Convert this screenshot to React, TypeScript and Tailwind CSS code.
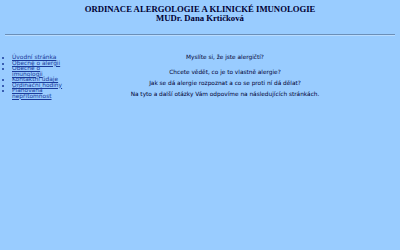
export default function App() {
  const links = [
    "Úvodní stránka",
    "Obecně o alergii",
    "Obecně o imunologii",
    "Kontaktní údaje",
    "Ordinační hodiny",
    "Plánovaná nepřítomnost",
  ]

  return (
    <div className="min-h-[250px] bg-[#99ccff] text-[#000033] font-['Liberation_Serif',serif]">
      {/* Header */}
      <header className="pt-[5px] text-center font-bold text-[8.7px] leading-[8.6px]">
        <h1>ORDINACE ALERGOLOGIE A KLINICKÉ IMUNOLOGIE</h1>
        <h2>MUDr. Dana Krtičková</h2>
      </header>
      <hr className="mx-[5px] mt-[12px] border-t border-b border-t-[#6b8fb8] border-b-[#b9dcff]" />

      {/* Body */}
      <div className="flex mt-[17px] font-['DejaVu_Sans',sans-serif]">
        <ul className="w-[66px] shrink-0 mt-[2px] pl-[12px] list-disc text-[5.9px] leading-[5.5px] text-[#1a3a9a]">
          {links.map((l) => (
            <li key={l}>
              <a href="#" className="underline">{l}</a>
            </li>
          ))}
        </ul>
        <main className="flex-1 pr-[16px] text-center text-[5.8px] leading-[6px]">
          <p className="mt-[1px]">Myslíte si, že jste alergičtí?</p>
          <p className="mt-[9px]">Chcete vědět, co je to vlastně alergie?</p>
          <p className="mt-[5px]">Jak se dá alergie rozpoznat a co se proti ní dá dělat?</p>
          <p className="mt-[5px]">Na tyto a další otázky Vám odpovíme na následujících stránkách.</p>
        </main>
      </div>
    </div>
  )
}
